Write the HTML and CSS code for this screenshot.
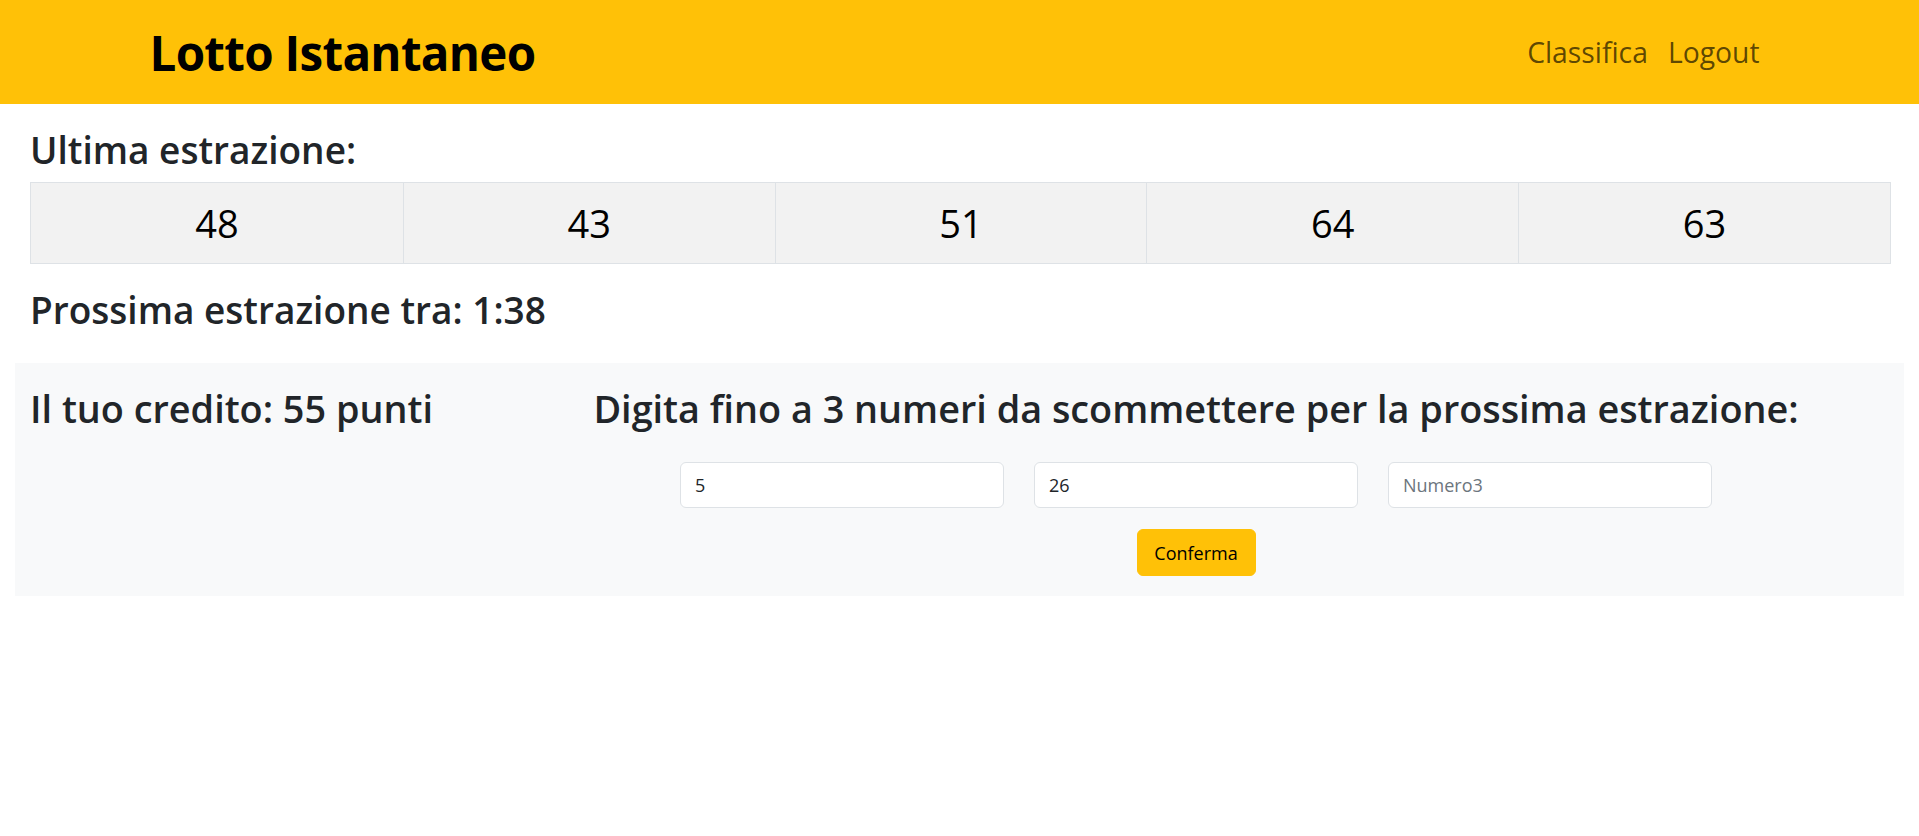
FILE: index.html
```html
<!DOCTYPE html>
<html lang="it">
<head>
<meta charset="utf-8">
<title>Lotto Istantaneo</title>
<link rel="stylesheet" href="styles.css">
</head>
<body>
<header class="topbar">
  <div class="topbar-inner">
    <h1 class="brand">Lotto Istantaneo</h1>
    <nav class="nav">
      <a class="nav-link" href="#">Classifica</a>
      <a class="nav-link" href="#">Logout</a>
    </nav>
  </div>
</header>
<main class="main">
  <section class="draw">
    <h3 class="heading">Ultima estrazione:</h3>
    <div class="numbers">
      <div class="num">48</div>
      <div class="num">43</div>
      <div class="num">51</div>
      <div class="num">64</div>
      <div class="num">63</div>
    </div>
    <h3 class="heading next">Prossima estrazione tra: 1:38</h3>
  </section>
  <section class="bet">
    <div class="credit">
      <h3 class="heading bet-heading">Il tuo credito: 55 punti</h3>
    </div>
    <div class="bet-form">
      <h3 class="heading bet-heading">Digita fino a 3 numeri da scommettere per la prossima estrazione:</h3>
      <div class="inputs">
        <input class="field" type="text" value="5">
        <input class="field" type="text" value="26">
        <input class="field" type="text" placeholder="Numero3">
      </div>
      <button class="btn" type="button">Conferma</button>
    </div>
  </section>
</main>
</body>
</html>
```
FILE: styles.css
```css
* { box-sizing: border-box; }
html, body { margin: 0; padding: 0; }
body {
  font-family: "Open Sans", "Noto Sans", sans-serif;
  color: #212529;
  background: #fff;
}
.topbar {
  background: #ffc107;
  height: 104px;
}
.topbar-inner {
  width: 1620px;
  margin: 0 auto;
  height: 100%;
  display: flex;
  align-items: center;
  justify-content: space-between;
}
.brand {
  margin: 0;
  font-size: 47.5px;
  font-weight: 700;
  color: #000;
  line-height: 1.2;
  letter-spacing: -0.7px;
}
.nav {
  display: flex;
}
.nav-link {
  font-size: 28.3px;
  color: rgba(0, 0, 0, 0.65);
  text-decoration: none;
  padding: 0 10px;
  line-height: 1.5;
}
.main {
  padding: 0 15px;
}
.draw {
  padding: 24px 13px 0 15px;
}
.heading {
  margin: 0;
  font-size: 37px;
  font-weight: 600;
  line-height: 1.2;
}
.bet-heading {
  font-size: 37.8px;
}
.numbers {
  margin-top: 10px;
  display: grid;
  grid-template-columns: repeat(5, 1fr);
  border: 1px solid #dee2e6;
  background: #f2f2f2;
}
.num {
  height: 80px;
  display: flex;
  align-items: center;
  justify-content: center;
  font-size: 38px;
  color: #000;
  border-left: 1px solid #dee2e6;
}
.num:first-child { border-left: none; }
.next {
  margin-top: 24px;
}
.bet {
  margin-top: 30px;
  background: #f8f9fa;
  padding: 23px 15px 20px 15px;
  display: grid;
  grid-template-columns: 473px 1fr;
}
.bet-form {
  display: flex;
  flex-direction: column;
  align-items: center;
}
.inputs {
  margin-top: 31px;
  display: flex;
  gap: 30px;
}
.field {
  width: 324px;
  height: 46px;
  border: 1px solid #dee2e6;
  border-radius: 6px;
  background: #fff;
  padding: 0 14px;
  font-family: "Open Sans", "Noto Sans", sans-serif;
  font-size: 18px;
  color: #212529;
}
.field::placeholder { color: #6c757d; }
.btn {
  margin-top: 21px;
  width: 119px;
  height: 47px;
  background: #ffc107;
  border: 1px solid #ffc107;
  border-radius: 6px;
  font-family: "Open Sans", "Noto Sans", sans-serif;
  font-size: 18px;
  color: #000;
  padding: 0;
}
```
